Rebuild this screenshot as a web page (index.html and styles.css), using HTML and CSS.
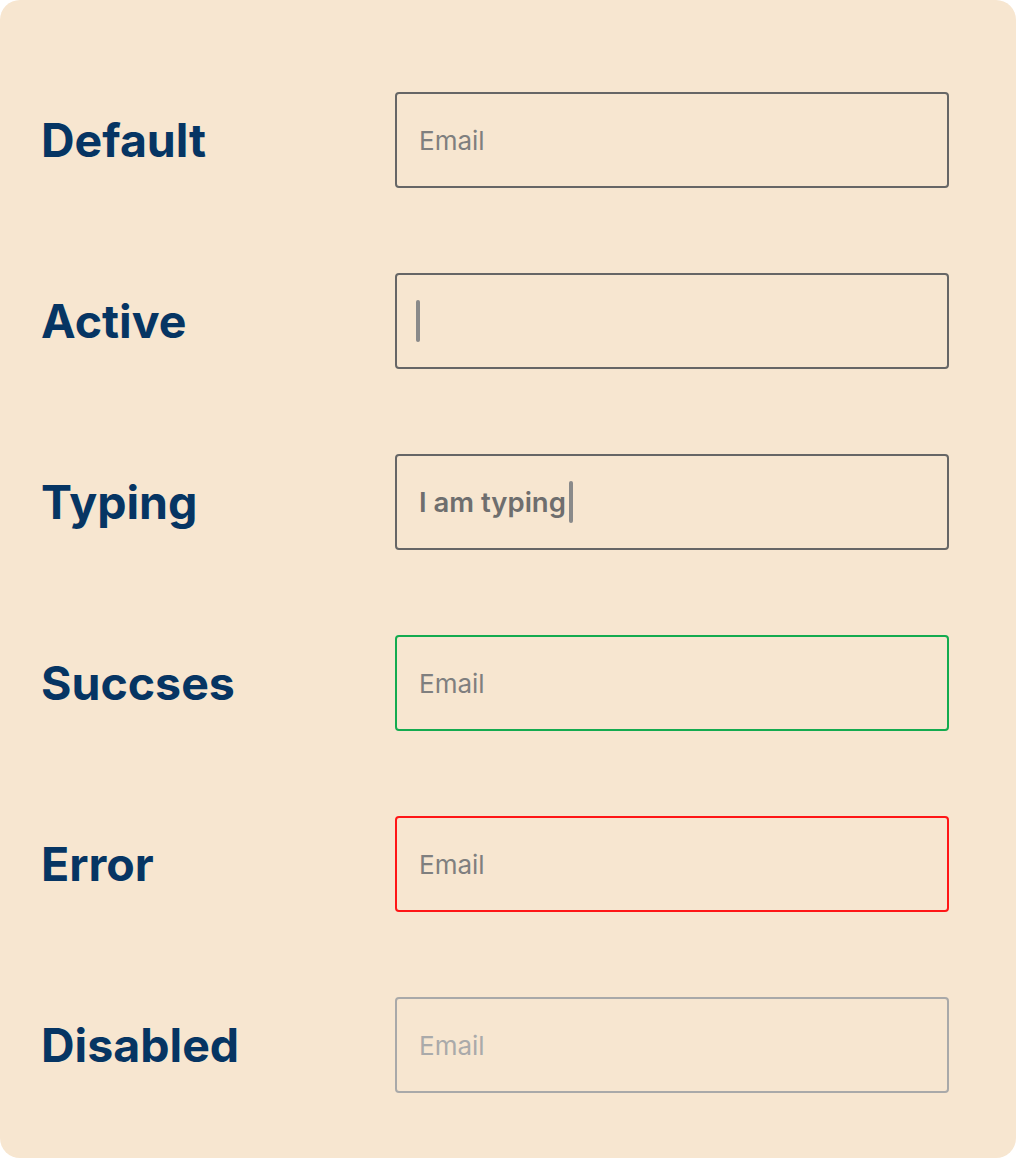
FILE: index.html
```html
<!DOCTYPE html>
<html>
<head>
<meta charset="utf-8">
<link rel="stylesheet" href="styles.css">
</head>
<body>
<div class="card">
  <div class="row">
    <div class="label">Default</div>
    <div class="field"><span class="ph">Email</span></div>
  </div>
  <div class="row">
    <div class="label">Active</div>
    <div class="field"><span class="caret first"></span></div>
  </div>
  <div class="row">
    <div class="label">Typing</div>
    <div class="field"><span class="typed">I am typing</span><span class="caret"></span></div>
  </div>
  <div class="row">
    <div class="label">Succses</div>
    <div class="field success"><span class="ph">Email</span></div>
  </div>
  <div class="row">
    <div class="label">Error</div>
    <div class="field error"><span class="ph">Email</span></div>
  </div>
  <div class="row">
    <div class="label">Disabled</div>
    <div class="field disabled"><span class="ph">Email</span></div>
  </div>
</div>
</body>
</html>
```
FILE: styles.css
```css
html, body { margin: 0; padding: 0; background: #ffffff; }
body { width: 1017px; height: 1160px; font-family: Inter, "Noto Sans", sans-serif; }
.card {
  box-sizing: border-box;
  width: 1016px;
  height: 1158px;
  background: #f7e6d0;
  border-radius: 20px;
  padding: 92px 67px 65px 41px;
  display: flex;
  flex-direction: column;
  gap: 85px;
}
.row { display: flex; align-items: center; height: 96px; }
.label {
  width: 354px;
  font-size: 46.5px;
  font-weight: 700;
  color: #063563;
}
.field {
  box-sizing: border-box;
  width: 554px;
  height: 96px;
  border: 2px solid #666666;
  border-radius: 4px;
  display: flex;
  align-items: center;
  padding-left: 22px;
}
.ph { font-size: 26px; color: #7f7f7f; font-weight: 400; }
.typed { font-size: 27.5px; color: #6e6e6e; font-weight: 600; }
.caret {
  display: inline-block;
  width: 4px;
  height: 42px;
  background: #8a8a8a;
  border-radius: 2px;
  margin-left: 3px;
}
.caret.first { margin-left: -3px; }
.success { border-color: #14ab4f; }
.error { border-color: #ff1616; }
.disabled { border-color: #a9a9a9; }
.disabled .ph { color: #aaaaaa; }
```
